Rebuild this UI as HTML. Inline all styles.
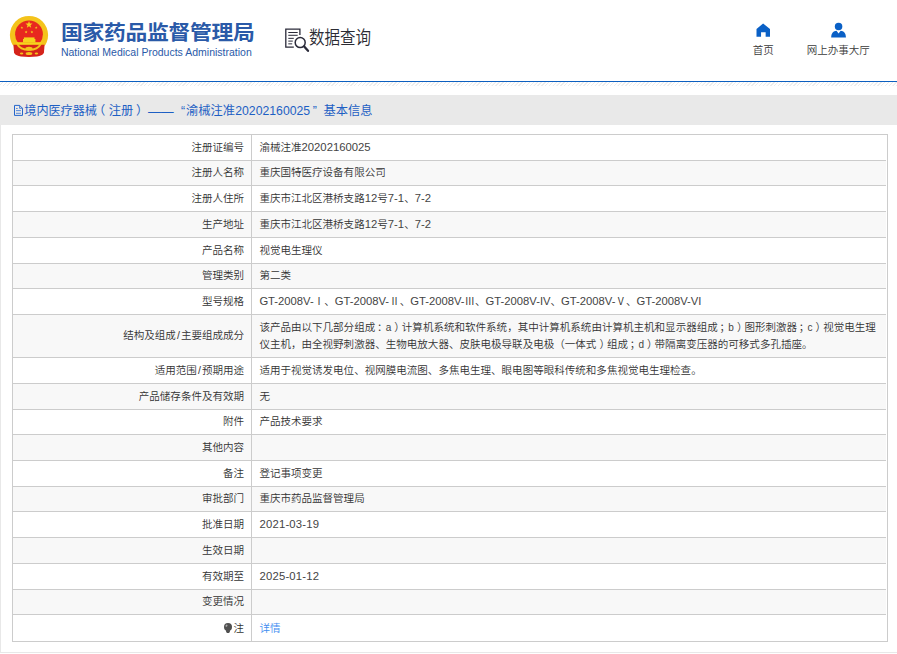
<!DOCTYPE html>
<html lang="zh-CN">
<head>
<meta charset="utf-8">
<title>国家药品监督管理局 数据查询</title>
<style>
html,body{margin:0;padding:0;background:#fff;}
body{width:897px;height:654px;overflow:hidden;position:relative;font-family:"Liberation Sans","Noto Sans CJK SC",sans-serif;color:#333;}
.abs{position:absolute;white-space:nowrap;}
#hdr{position:absolute;left:0;top:0;width:897px;height:81px;background:#fff;}
#logo{left:4px;top:10px;width:52px;height:52px;}
#t1{left:60.5px;top:18px;font-size:20.3px;line-height:30px;font-weight:bold;color:#2a5aa8;letter-spacing:-.3px;transform:scaleX(1.076);transform-origin:0 0;}
#t2{left:60.9px;top:45.1px;font-size:10.5px;line-height:14px;color:#2a5aa8;}
#q{left:308.6px;top:26.2px;font-size:18.3px;line-height:24px;color:#2b2b33;font-family:"Liberation Sans","Noto Sans CJK SC DemiLight","Noto Sans CJK SC",sans-serif;transform:scaleX(.85);transform-origin:0 0;}
#qi{left:280px;top:20px;width:40px;height:40px;}
#h1{left:752.8px;top:42px;font-size:10.5px;line-height:16px;color:#3a3a3a;font-family:"Liberation Sans","Noto Sans CJK SC DemiLight","Noto Sans CJK SC",sans-serif;}
#h2{left:806.8px;top:42px;font-size:10.5px;line-height:16px;color:#3a3a3a;font-family:"Liberation Sans","Noto Sans CJK SC DemiLight","Noto Sans CJK SC",sans-serif;}
#i1{left:745px;top:15px;width:40px;height:30px;}
#i2{left:820px;top:15px;width:40px;height:30px;}
#line{position:absolute;left:0;top:80.6px;width:897px;height:1.7px;background:#0c5fc0;}
#stripe{position:absolute;left:0;top:82.3px;width:897px;height:4px;background:repeating-linear-gradient(135deg,#fff 0,#fff 1.6px,#ececec 1.9px,#ececec 2.7px);}
#bar{position:absolute;left:0;top:95px;width:897px;height:29.7px;background:#e9e9e9;}
#bt{left:0;top:103.3px;font-size:12.26px;line-height:17px;color:#1d5fc4;width:400px;height:17px;}
#bt span{position:absolute;top:0;}
#bi{left:8px;top:98px;width:40px;height:24px;}
#panel{position:absolute;left:0;top:124.7px;width:897px;height:527.3px;border-left:1px solid #e8e8e8;border-bottom:1px solid #e8e8e8;box-sizing:content-box;}
table{position:absolute;left:12px;top:134px;width:876px;box-sizing:border-box;padding-right:1.2px;border-collapse:separate;border-spacing:0;border:1px solid #ccc;font-size:10.54px;line-height:17.35px;color:#333;table-layout:fixed;font-family:"Liberation Sans","Noto Sans CJK SC DemiLight","Noto Sans CJK SC",sans-serif;}
td{white-space:nowrap;padding:3.7px 2px 3.7px 7.4px;border-bottom:1px solid #ccc;vertical-align:middle;}
.s{padding:0 1px 0 1.2px;}
.p{position:relative;left:3px;}
.c{position:relative;left:1.7px;}
.g{font-size:11.24px;color:#444;}
.m{font-size:10px;color:#444;}
.n{font-size:11.3px;font-weight:400;color:#444;}
.d{letter-spacing:.22px;}
.r{display:inline-block;width:10.54px;text-align:center;}
td.l{width:223.1px;padding-right:6.9px;padding-left:8px;text-align:right;border-right:1px solid #ccc;}
tr:nth-child(even) td{background:#f8f8f8;}
tr:last-child td{border-bottom:0;padding-top:4.4px;padding-bottom:3.8px;}
a{color:#3f8cf0;text-decoration:none;}
</style>
</head>
<body>
<div id="hdr">
<svg id="logo" class="abs" viewBox="0 0 52 52">
 <defs><clipPath id="cd"><rect x="0" y="0" width="52" height="33"/></clipPath><clipPath id="cu"><rect x="0" y="0" width="52" height="35.500"/></clipPath></defs>
 <circle cx="25" cy="25" r="19.100" fill="#f4c31b" clip-path="url(#cu)"/>
 <path d="M9.400 34.800 L40.600 34.800 L39.900 43 Q38 45.600 33 46.400 L25 47 L17 46.400 Q12 45.600 10.100 43 Z" fill="#d5231b"/>
 <circle cx="25" cy="24.300" r="13.900" fill="#e8281f" clip-path="url(#cd)"/>
 <polygon points="25.00,11.00 25.91,13.44 28.52,13.56 26.48,15.18 27.17,17.69 25.00,16.25 22.83,17.69 23.52,15.18 21.48,13.56 24.09,13.44" fill="#f6d31d"/><polygon points="17.90,16.15 18.27,17.14 19.33,17.19 18.50,17.84 18.78,18.86 17.90,18.28 17.02,18.86 17.30,17.84 16.47,17.19 17.53,17.14" fill="#f6d31d"/><polygon points="32.20,16.15 32.57,17.14 33.63,17.19 32.80,17.84 33.08,18.86 32.20,18.28 31.32,18.86 31.60,17.84 30.77,17.19 31.83,17.14" fill="#f6d31d"/><polygon points="22.10,20.60 22.47,21.59 23.53,21.64 22.70,22.29 22.98,23.31 22.10,22.73 21.22,23.31 21.50,22.29 20.67,21.64 21.73,21.59" fill="#f6d31d"/><polygon points="27.90,20.60 28.27,21.59 29.33,21.64 28.50,22.29 28.78,23.31 27.90,22.73 27.02,23.31 27.30,22.29 26.47,21.64 27.53,21.59" fill="#f6d31d"/>
 <rect x="19.900" y="27.400" width="10.600" height="1.800" fill="#f6d31d"/>
 <rect x="19" y="29" width="12.400" height="3.400" fill="#f6d31d"/>
 <rect x="12.500" y="32.200" width="25" height="2.200" fill="#f6d31d"/>
 <path d="M13.300 34 Q16 39.800 25 39.800 Q34 39.800 36.700 34" fill="none" stroke="#f4c31b" stroke-width="1.900"/>
 <ellipse cx="25" cy="38.700" rx="3.600" ry="1.900" fill="#f4c31b"/>
 <ellipse cx="25" cy="43.400" rx="3.300" ry="1.500" fill="#f4c31b"/>
 <ellipse cx="17.600" cy="43.600" rx="1.700" ry="1" fill="#f4c31b"/>
 <ellipse cx="32.400" cy="43.600" rx="1.700" ry="1" fill="#f4c31b"/>
</svg>
<div id="t1" class="abs">国家药品监督管理局</div>
<div id="t2" class="abs">National Medical Products Administration</div>
<svg id="qi" class="abs" viewBox="0 0 40 40" fill="none" stroke="#2b2b3a">
 <path d="M19.900 15V9.200H5.800v17.900h8" stroke-width="1.300"/>
 <path d="M8.300 12.500h9.400M8.300 15.300h9.400M8.300 18.350h5.500M8.300 21.100h4.500M8.300 23.850h3.900" stroke-width="1"/>
 <circle cx="20.200" cy="22.600" r="5" stroke-width="1.500"/>
 <path d="M24.200 26.600l3.800 4.200" stroke-width="2.300" stroke-linecap="round"/>
</svg>
<div id="q" class="abs">数据查询</div>
<svg id="i1" class="abs" viewBox="0 0 40 30"><path d="M18.100 8.600L25 14V21.800H20.650V17.200H16.050V21.800H11.500V14z" fill="#0a60c6"/></svg>
<div id="h1" class="abs">首页</div>
<svg id="i2" class="abs" viewBox="0 0 40 30"><circle cx="18.580" cy="11.470" r="3.750" fill="#0a60c6"/><path d="M11.200 22.500C11.200 18 13.500 15.900 16.500 15.800L18.580 18.600L20.650 15.800C23.700 15.900 25.950 18 25.950 22.500z" fill="#0a60c6"/></svg>
<div id="h2" class="abs">网上办事大厅</div>
</div>
<div id="line"></div>
<div id="stripe"></div>
<div id="bar"></div>
<svg id="bi" class="abs" viewBox="0 0 40 24" fill="none" stroke="#2566cc" stroke-width="1"><path d="M6.500 7.400h5.100l2.900 2.900v7.100h-8z"/><path d="M11.600 7.400v2.900h2.900" stroke-width=".8"/><path d="M8 10.500h1.700M8 12.600h4.900M8 15.300h4.900" stroke-width=".9" stroke="#4a7fd6"/></svg>
<div id="bt" class="abs"><span style="left:24.3px;font-size:12.1px">境内医疗器械</span><span style="left:92.9px">（</span><span style="left:108.8px">注册</span><span style="left:136px">）</span><span style="left:147.9px;font-size:12.9px">——</span><span style="left:181px">“</span><span style="left:186.1px">渝械注准</span><span style="left:235.2px">20202160025</span><span style="left:312.8px">”</span><span style="left:323.4px">基本信息</span></div>
<div id="panel"></div>
<table cellspacing="0" cellpadding="0">
<tr><td class="l">注册证编号</td><td>渝械注准<span class="n">20202160025</span></td></tr>
<tr><td class="l">注册人名称</td><td>重庆国特医疗设备有限公司</td></tr>
<tr><td class="l">注册人住所</td><td>重庆市江北区港桥支路<span class="n">12</span>号<span class="n">7-1</span>、<span class="n">7-2</span></td></tr>
<tr><td class="l">生产地址</td><td>重庆市江北区港桥支路<span class="n">12</span>号<span class="n">7-1</span>、<span class="n">7-2</span></td></tr>
<tr><td class="l">产品名称</td><td>视觉电生理仪</td></tr>
<tr><td class="l">管理类别</td><td>第二类</td></tr>
<tr><td class="l">型号规格</td><td><span class="g">GT-2008V-</span><span class="r">Ⅰ</span>、<span class="g">GT-2008V-</span><span class="r">Ⅱ</span>、<span class="g">GT-2008V-</span><span class="r">Ⅲ</span>、<span class="g">GT-2008V-IV</span>、<span class="g">GT-2008V-</span><span class="r">Ⅴ</span>、<span class="g">GT-2008V-VI</span></td></tr>
<tr><td class="l">结构及组成<span class="s">/</span>主要组成成分</td><td>该产品由以下几部分组成<span class="c">：</span><span class="m">a</span><span class="p">）</span>计算机系统和软件系统，其中计算机系统由计算机主机和显示器组成<span class="c">；</span><span class="m">b</span><span class="p">）</span>图形刺激器<span class="c">；</span><span class="m">c</span><span class="p">）</span>视觉电生理<br>仪主机，由全视野刺激器、生物电放大器、皮肤电极导联及电极（一体式<span class="p">）</span>组成<span class="c">；</span><span class="m">d</span><span class="p">）</span>带隔离变压器的可移式多孔插座。</td></tr>
<tr><td class="l">适用范围<span class="s">/</span>预期用途</td><td>适用于视觉诱发电位、视网膜电流图、多焦电生理、眼电图等眼科传统和多焦视觉电生理检查。</td></tr>
<tr><td class="l">产品储存条件及有效期</td><td>无</td></tr>
<tr><td class="l">附件</td><td>产品技术要求</td></tr>
<tr><td class="l">其他内容</td><td>&nbsp;</td></tr>
<tr><td class="l">备注</td><td>登记事项变更</td></tr>
<tr><td class="l">审批部门</td><td>重庆市药品监督管理局</td></tr>
<tr><td class="l">批准日期</td><td><span class="n d">2021-03-19</span></td></tr>
<tr><td class="l">生效日期</td><td>&nbsp;</td></tr>
<tr><td class="l">有效期至</td><td><span class="n d">2025-01-12</span></td></tr>
<tr><td class="l">变更情况</td><td>&nbsp;</td></tr>
<tr><td class="l"><svg width="8" height="10.400" viewBox="0 0 8 10.400" style="vertical-align:-1.600px;margin-right:1.300px"><circle cx="4" cy="4" r="4" fill="#505050"/><path d="M2.100 7h3.800v1.600l-.9 1.700H3l-.9-1.700z" fill="#505050"/><ellipse cx="2.500" cy="2.700" rx=".9" ry="1.200" fill="#aaa" transform="rotate(35 2.500 2.700)"/></svg>注</td><td><a>详情</a></td></tr>
</table>
</body>
</html>
